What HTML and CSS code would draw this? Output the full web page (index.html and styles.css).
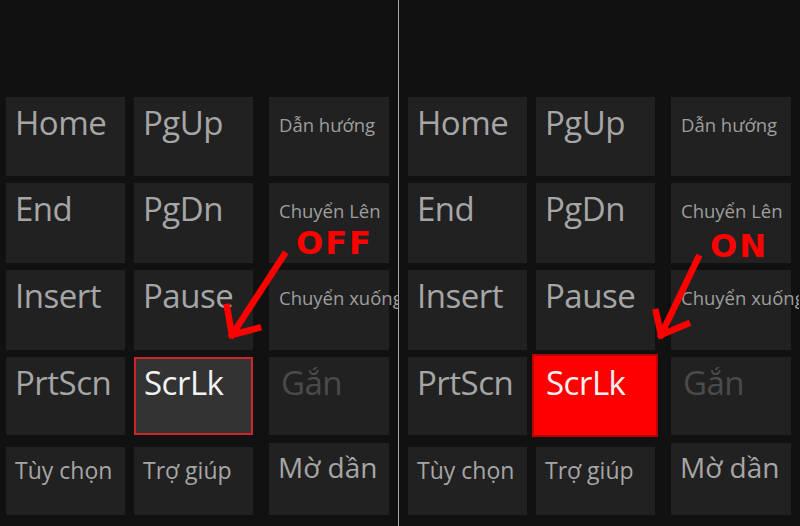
FILE: index.html
```html
<!DOCTYPE html>
<html lang="vi">
  <head>
    <meta charset="UTF-8" />
    <meta name="viewport" content="width=device-width, initial-scale=1.0" />
    <title>ScrLk OFF / ON</title>
    <link rel="stylesheet" href="styles.css">
  </head>
  <body>
    <div class="screens">
      <div class="panel panel-left">
        <div class="keys">
          <div class="key">Home</div>
          <div class="key">PgUp</div>
          <div class="key key-small">Dẫn hướng</div>
          <div class="key">End</div>
          <div class="key">PgDn</div>
          <div class="key key-small">Chuyển Lên</div>
          <div class="key">Insert</div>
          <div class="key">Pause</div>
          <div class="key key-small">Chuyển xuống</div>
          <div class="key">PrtScn</div>
          <div class="key scrlk">ScrLk</div>
          <div class="key key-dim">Gắn</div>
          <div class="key key-mid bottom">Tùy chọn</div>
          <div class="key key-mid bottom">Trợ giúp</div>
          <div class="key key-large bottom">Mờ dần</div>
        </div>
        <span class="label label-off">OFF</span>
        <svg class="arrow arrow-off" width="80" height="100" viewBox="0 0 80 100">
          <path d="M70 5 L18 85 M13 57 L18 85 L44 78" />
        </svg>
      </div>

      <div class="panel panel-right">
        <div class="keys">
          <div class="key">Home</div>
          <div class="key">PgUp</div>
          <div class="key key-small">Dẫn hướng</div>
          <div class="key">End</div>
          <div class="key">PgDn</div>
          <div class="key key-small">Chuyển Lên</div>
          <div class="key">Insert</div>
          <div class="key">Pause</div>
          <div class="key key-small">Chuyển xuống</div>
          <div class="key">PrtScn</div>
          <div class="key scrlk on">ScrLk</div>
          <div class="key key-dim">Gắn</div>
          <div class="key key-mid bottom">Tùy chọn</div>
          <div class="key key-mid bottom">Trợ giúp</div>
          <div class="key key-large bottom">Mờ dần</div>
        </div>
        <span class="label label-on">ON</span>
        <svg class="arrow arrow-on" width="80" height="100" viewBox="0 0 80 100">
          <path d="M68 5 L31 82 M26 59 L31 82 L57 71" />
        </svg>
      </div>
    </div>
  </body>
</html>
```

FILE: styles.css
```css
html {
  font-family: "Open Sans", "Noto Sans", sans-serif;
}

body {
  margin: 0;
  background-color: #111111;
  width: 800px;
  height: 526px;
  overflow: hidden;
}

.screens {
  display: flex;
  height: 526px;
}

.panel {
  position: relative;
  overflow: hidden;
  height: 526px;
  padding-top: 97px;
  box-sizing: border-box;
  background-color: #111111;
}

.panel-left {
  width: 399px;
  padding-left: 6px;
  border-right: 1px solid #a9a9a9;
}

.panel-right {
  width: 400px;
  padding-left: 9px;
}

.keys {
  display: grid;
  grid-template-columns: 119px 119px 127px;
  grid-template-rows: 79px 80px 80px 78px 73px;
  column-gap: 9px;
  row-gap: 7px;
}

.key {
  background-color: #212121;
  color: #a6a6a6;
  font-size: 33px;
  line-height: 1;
  padding: 9px 0 0 9px;
  box-sizing: border-box;
  white-space: nowrap;
  letter-spacing: -0.5px;
}

.keys .key:nth-child(3n) {
  width: 120px;
  justify-self: end;
}

.key-small {
  font-size: 18.5px;
  color: #9e9e9e;
  padding: 19px 0 0 10px;
  letter-spacing: 0;
}

.key-mid {
  font-size: 23px;
  padding: 12px 0 0 9px;
  letter-spacing: 0;
}

.key-large {
  font-size: 28px;
  padding: 10px 0 0 9px;
  letter-spacing: 0;
}

.key-dim {
  color: #4b4b4b;
  padding-left: 12px;
}

.bottom {
  margin-top: 5px;
}

.keys .key-large.bottom {
  margin-top: 1px;
}

.scrlk {
  background-color: #333333;
  border: 2px solid #d0232a;
  color: #f2f2f2;
  padding: 7px 0 0 8px;
}

.scrlk.on {
  background-color: #ff0000;
  border-color: #b80000;
  margin: -3px -3px -2px -4px;
  padding: 10px 0 0 12px;
}

.label {
  position: absolute;
  color: #ff0000;
  font-family: "DejaVu Sans", sans-serif;
  font-weight: bold;
  font-size: 32px;
  line-height: 1;
  letter-spacing: 2px;
}

.label-off {
  left: 296px;
  top: 227px;
}

.label-on {
  left: 311px;
  top: 230px;
}

.arrow {
  position: absolute;
}

.arrow path {
  fill: none;
  stroke: #ff0000;
  stroke-width: 6.5;
  stroke-linecap: square;
  stroke-linejoin: miter;
}

.arrow-off {
  left: 214px;
  top: 250px;
}

.arrow-on {
  left: 231px;
  top: 253px;
}
```
